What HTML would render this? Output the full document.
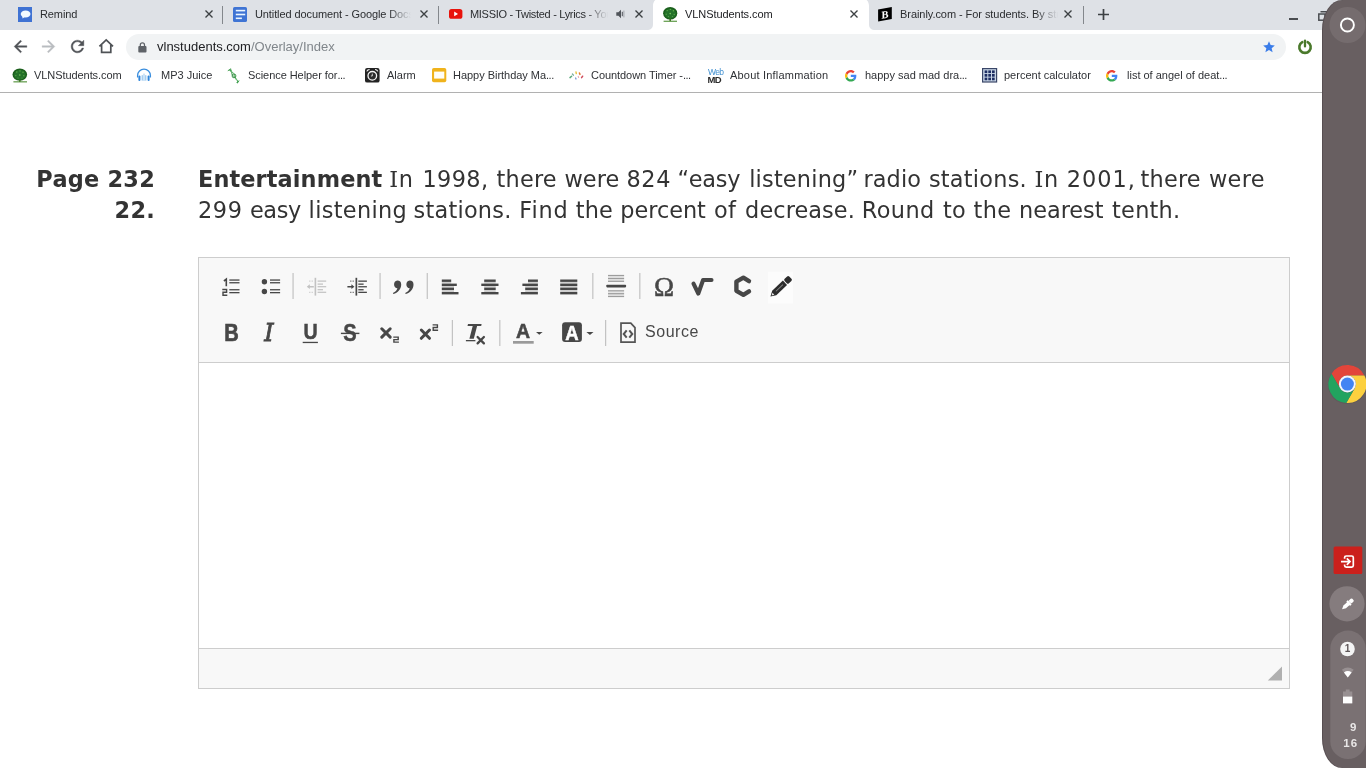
<!DOCTYPE html>
<html lang="en">
<head>
<meta charset="utf-8">
<title>VLNStudents.com</title>
<style>
html,body{margin:0;padding:0;}
body{width:1366px;height:768px;overflow:hidden;position:relative;background:#fff;font-family:"Liberation Sans",sans-serif;color:#202124;}
.abs{position:absolute;}
svg{position:absolute;overflow:visible;}
#chrome{left:0;top:0;width:1366px;height:93px;will-change:transform;}
#tabstrip{left:0;top:0;width:1366px;height:30px;background:#dee1e6;}
#toolbar{left:0;top:30px;width:1366px;height:62px;background:#fff;}
#bmline{left:0;top:92px;width:1366px;height:1px;background:#b1b1b1;}
.tabtitle{position:absolute;top:6px;height:16px;line-height:16px;font-size:11px;color:#2b2d30;white-space:nowrap;overflow:hidden;}
.fade{-webkit-mask-image:linear-gradient(90deg,#000 0,#000 calc(100% - 22px),transparent 100%);mask-image:linear-gradient(90deg,#000 0,#000 calc(100% - 22px),transparent 100%);}
.tabsep{position:absolute;top:6px;width:1px;height:18px;background:#83878c;}
#omni{left:126px;top:34px;width:1160px;height:26px;border-radius:13px;background:#f1f3f4;}
#url{left:157px;top:39px;font-size:13px;line-height:16px;white-space:nowrap;color:#202124;}
#url span{color:#80868b;}
.el{letter-spacing:-0.5px;}
.bm{position:absolute;top:67px;height:16px;line-height:16px;font-size:11px;color:#2f3135;white-space:nowrap;}
/* page */
#content{will-change:transform;font-family:"DejaVu Sans","Liberation Sans",sans-serif;color:#333;font-size:22.4px;line-height:31px;}
#pnum{left:0;top:164px;width:155px;text-align:right;font-weight:bold;letter-spacing:0.25px;}
#qtext{left:198.800px;top:164px;width:1110px;height:62px;white-space:nowrap;}
#qtext .ln{position:absolute;left:0;width:1110px;height:31px;}
#qtext .ln span{position:absolute;top:0;}
#qtext .b{font-weight:bold;}
#qtext .vI{font-family:"DejaVu Serif","Liberation Serif",serif;font-style:normal;}
#editor{left:198px;top:257px;width:1090px;height:430px;border:1px solid #cdcdcd;background:#fff;box-sizing:content-box;will-change:transform;}
#edtop{left:0;top:0;width:1090px;height:104px;background:#f8f8f8;border-bottom:1px solid #cdcdcd;}
#edbot{left:0;top:390px;width:1090px;height:39px;background:#f8f8f8;border-top:1px solid #cdcdcd;}
.sep{position:absolute;width:1px;height:26px;background:#bcbcbc;}
.gi{position:absolute;color:#474747;white-space:nowrap;}
#edicons svg.ic{filter:blur(0.35px);}
/* shelf */
#shelf{left:1322px;top:0;width:44px;height:768px;background:#685f61;border-radius:20px 0 0 20px / 30px 0 0 30px;will-change:transform;overflow:hidden;box-shadow:inset 1px 0 0 rgba(50,40,45,0.30);}
</style>
</head>
<body>
<!-- ===== browser chrome ===== -->
<div id="chrome" class="abs">
<div id="tabstrip" class="abs"></div>
<div id="toolbar" class="abs"></div>
<!-- active tab shape -->
<svg style="left:640px;top:0" width="240" height="30" viewBox="0 0 240 30">
  <path d="M6.5 30 C11 30 13 28 13 24 L13 6 C13 1 16 -2 21 -2 L221 -2 C226 -2 229 1 229 6 L229 24 C229 28 231 30 235.5 30 Z" fill="#fff"/>
</svg>
<div id="bmline" class="abs"></div>

<!-- tab 1 : Remind -->
<svg style="left:18px;top:7px" width="14" height="15" viewBox="0 0 14 15">
  <rect width="14" height="15" fill="#3f72d3"/>
  <ellipse cx="7.6" cy="7" rx="4.9" ry="3.5" fill="#f3fbff"/>
  <path d="M4.2 8.6 L4.6 11.6 L7.4 9.6 Z" fill="#f3fbff"/>
</svg>
<div class="tabtitle" style="left:40px;width:150px;letter-spacing:-0.1px;">Remind</div>
<svg class="tx" style="left:205px;top:10px" width="8" height="8" viewBox="0 0 8 8"><path d="M0.5 0.5 L7.5 7.5 M7.5 0.5 L0.5 7.5" stroke="#3c4043" stroke-width="1.35" fill="none"/></svg>
<div class="tabsep" style="left:222px;"></div>

<!-- tab 2 : Docs -->
<svg style="left:233px;top:7px" width="14" height="15" viewBox="0 0 14 15">
  <rect width="14" height="15" rx="1.6" fill="#3f74d4"/>
  <rect x="2.8" y="2.8" width="9.4" height="1.6" fill="#eaf6ff"/>
  <rect x="2.8" y="6.7" width="9.4" height="1.6" fill="#eaf6ff"/>
  <rect x="2.8" y="10.5" width="6.1" height="1.6" fill="#eaf6ff"/>
</svg>
<div class="tabtitle fade" style="left:255px;width:156px;letter-spacing:-0.1px;">Untitled document - Google Docs</div>
<svg class="tx" style="left:420px;top:10px" width="8" height="8" viewBox="0 0 8 8"><path d="M0.5 0.5 L7.5 7.5 M7.5 0.5 L0.5 7.5" stroke="#3c4043" stroke-width="1.35" fill="none"/></svg>
<div class="tabsep" style="left:438px;"></div>

<!-- tab 3 : YouTube -->
<svg style="left:448.5px;top:9.4px" width="13.4" height="9.8" viewBox="0 0 13.4 9.8">
  <rect width="13.4" height="9.8" rx="2.6" fill="#e8130c"/>
  <path d="M5.2 2.6 L9 4.9 L5.2 7.2 Z" fill="#fff"/>
</svg>
<div class="tabtitle fade" style="left:470px;width:138px;letter-spacing:-0.31px;">MISSIO - Twisted - Lyrics - YouTube</div>
<svg style="left:616px;top:9px" width="9" height="10" viewBox="0 0 9 10">
  <path d="M0.3 3.3 H2.4 L5 0.7 V9.3 L2.4 6.7 H0.3 Z" fill="#50545a"/>
  <path d="M6.3 2.8 V7.2" stroke="#50545a" stroke-width="1" fill="none"/>
  <path d="M7.9 1.6 V8.4" stroke="#9a9ea4" stroke-width="0.9" fill="none"/>
</svg>
<svg class="tx" style="left:634.7px;top:10.1px" width="8" height="8" viewBox="0 0 8 8"><path d="M0.5 0.5 L7.5 7.5 M7.5 0.5 L0.5 7.5" stroke="#3c4043" stroke-width="1.35" fill="none"/></svg>

<!-- tab 4 : VLN (active) -->
<svg style="left:662px;top:6px" width="16" height="17" viewBox="0 0 16 17">
  <ellipse cx="8.2" cy="7.3" rx="7.1" ry="6.3" fill="#1b5f1c"/>
  <ellipse cx="8.2" cy="7.6" rx="5.6" ry="4.9" fill="#24722a"/>
  <circle cx="5.2" cy="4.6" r="0.7" fill="#5fae48"/><circle cx="8.4" cy="3.4" r="0.7" fill="#5fae48"/><circle cx="11.4" cy="4.8" r="0.7" fill="#5fae48"/>
  <circle cx="4.2" cy="8.2" r="0.7" fill="#55a544"/><circle cx="8.2" cy="7.6" r="0.8" fill="#79c85c"/><circle cx="12.2" cy="8.4" r="0.7" fill="#55a544"/>
  <circle cx="6.4" cy="10.6" r="0.6" fill="#55a544"/><circle cx="10.4" cy="10.6" r="0.6" fill="#55a544"/>
  <rect x="7.4" y="12.6" width="1.6" height="2.6" fill="#3f6f22"/>
  <rect x="1.6" y="14.7" width="13.4" height="1.1" fill="#4f8f35"/>
</svg>
<div class="tabtitle" style="left:685px;width:150px;color:#202124;letter-spacing:-0.07px;">VLNStudents.com</div>
<svg class="tx" style="left:849.6px;top:10.1px" width="8" height="8" viewBox="0 0 8 8"><path d="M0.5 0.5 L7.5 7.5 M7.5 0.5 L0.5 7.5" stroke="#3c4043" stroke-width="1.35" fill="none"/></svg>

<!-- tab 5 : Brainly -->
<svg style="left:878px;top:7px" width="14" height="15" viewBox="0 0 14 15">
  <path d="M0.1 2.4 L13.8 0 L13.8 12 L0.1 14.4 Z" fill="#000"/>
  <text x="7" y="11" text-anchor="middle" font-family="Liberation Serif,serif" font-weight="bold" font-size="10.5" fill="#fff" transform="skewY(-9) translate(0,1.2)">B</text>
</svg>
<div class="tabtitle fade" style="left:900px;width:158px;letter-spacing:-0.06px;">Brainly.com - For students. By students.</div>
<svg class="tx" style="left:1064.4px;top:10.3px" width="8" height="8" viewBox="0 0 8 8"><path d="M0.5 0.5 L7.5 7.5 M7.5 0.5 L0.5 7.5" stroke="#3c4043" stroke-width="1.35" fill="none"/></svg>
<div class="tabsep" style="left:1083px;"></div>
<!-- new tab + -->
<svg style="left:1098px;top:8.6px" width="11" height="11" viewBox="0 0 11 11"><path d="M5.5 0 V11 M0 5.5 H11" stroke="#3c4043" stroke-width="1.7" fill="none"/></svg>
<!-- window controls -->
<div class="abs" style="left:1289px;top:18px;width:9px;height:2px;background:#4a4d51;"></div>
<svg style="left:1318px;top:10.5px" width="10" height="10" viewBox="0 0 10 10"><path d="M2.5 0.8 H9.2 V7" stroke="#4a4d51" stroke-width="1.5" fill="none"/><rect x="0.8" y="3" width="6.2" height="6.2" stroke="#4a4d51" stroke-width="1.5" fill="none"/></svg>

<!-- nav buttons -->
<svg style="left:10.6px;top:36.7px" width="19" height="19" viewBox="0 0 24 24"><path d="M20 11H7.83l5.59-5.59L12 4l-8 8 8 8 1.41-1.41L7.83 13H20v-2z" fill="#4f5256" stroke="#4f5256" stroke-width="0.500"/></svg>
<svg style="left:38.8px;top:36.7px" width="19" height="19" viewBox="0 0 24 24"><path d="M12 4l-1.41 1.41L16.17 11H4v2h12.17l-5.58 5.59L12 20l8-8z" fill="#b9bcc0" stroke="#b9bcc0" stroke-width="0.500"/></svg>
<svg style="left:68px;top:36.900px" width="19" height="19" viewBox="0 0 24 24"><path d="M17.65 6.35C16.2 4.9 14.21 4 12 4c-4.42 0-7.99 3.58-7.99 8s3.57 8 7.99 8c3.73 0 6.84-2.55 7.73-6h-2.08c-.82 2.33-3.04 4-5.65 4-3.31 0-6-2.69-6-6s2.690-6 6-6c1.66 0 3.14.69 4.22 1.78L13 11h7V4l-2.35 2.35z" fill="#4f5256" stroke="#4f5256" stroke-width="0.500"/></svg>
<svg style="left:98px;top:38px" width="17" height="17" viewBox="0 0 17 17"><path d="M1.4 8.4 L8.2 2 L15 8.4 M3.6 7 V14.3 H12.8 V7" stroke="#4f5256" stroke-width="1.7" fill="none" stroke-linejoin="miter"/></svg>

<!-- omnibox -->
<div id="omni" class="abs"></div>
<svg style="left:138px;top:42px" width="9" height="11" viewBox="0 0 9 11">
  <rect x="0.3" y="4.1" width="8.2" height="6.3" rx="0.9" fill="#5f6368"/>
  <path d="M2.3 4.4 V3 A2.1 2.1 0 0 1 6.5 3 V4.4" stroke="#5f6368" stroke-width="1.25" fill="none"/>
</svg>
<div id="url" class="abs">vlnstudents.com<span>/Overlay/Index</span></div>
<!-- star -->
<svg style="left:1262.3px;top:40.3px" width="14" height="14" viewBox="0 0 24 24"><path d="M12 17.27L18.18 21l-1.64-7.030L22 9.240l-7.190-.61L12 2 9.190 8.630 2 9.240l5.460 4.730L5.820 21z" fill="#3b7de9"/></svg>
<!-- power ext -->
<svg style="left:1297px;top:39px" width="16" height="16" viewBox="0 0 16 16">
  <path d="M5.3 3.2 A5.7 5.7 0 1 0 10.7 3.2" stroke="#4a792b" stroke-width="2.6" fill="none" stroke-linecap="round"/>
  <path d="M8 1.6 V7.4" stroke="#4a792b" stroke-width="2.3" fill="none" stroke-linecap="round"/>
</svg>

<!-- bookmarks -->
<svg style="left:11.5px;top:67.5px" width="16" height="15" viewBox="0 0 16 15">
  <ellipse cx="7.8" cy="6.6" rx="7.3" ry="6.1" fill="#1b5f1c"/>
  <ellipse cx="7.8" cy="6.9" rx="5.8" ry="4.8" fill="#24722a"/>
  <circle cx="4.8" cy="4" r="0.7" fill="#5fae48"/><circle cx="8" cy="2.9" r="0.7" fill="#5fae48"/><circle cx="11" cy="4.2" r="0.7" fill="#5fae48"/>
  <circle cx="3.8" cy="7.6" r="0.7" fill="#55a544"/><circle cx="7.8" cy="7" r="0.8" fill="#79c85c"/><circle cx="11.8" cy="7.8" r="0.7" fill="#55a544"/>
  <circle cx="6" cy="10" r="0.6" fill="#55a544"/><circle cx="10" cy="10" r="0.6" fill="#55a544"/>
  <rect x="7" y="12" width="1.6" height="2" fill="#3f6f22"/>
  <rect x="1.4" y="13.3" width="13.6" height="1.1" fill="#4f8f35"/>
</svg>
<div class="bm" style="left:34px;letter-spacing:-0.07px;">VLNStudents.com</div>

<svg style="left:135.5px;top:68px" width="16" height="14" viewBox="0 0 16 14">
  <path d="M1.6 9.6 V7.6 A6.4 6.4 0 0 1 14.4 7.600 V9.600" stroke="#3a8ede" stroke-width="1.3" fill="none"/>
  <rect x="2.4" y="7.6" width="2" height="5.4" rx="0.9" fill="#2f86dc"/>
  <rect x="11.6" y="7.6" width="2" height="5.4" rx="0.9" fill="#2f86dc"/>
  <rect x="5.7" y="7.2" width="1" height="5.4" fill="#7fb8ea"/>
  <rect x="7.5" y="5.6" width="1" height="7.4" fill="#9cc9f0"/>
  <rect x="9.3" y="7.2" width="1" height="5.400" fill="#7fb8ea"/>
</svg>
<div class="bm" style="left:161px;">MP3 Juice</div>

<svg style="left:226.5px;top:67.500px" width="14" height="16" viewBox="0 0 14 16">
  <path d="M0.800 2.800 L3.800 0.800 L3.600 3.400" fill="none" stroke="#3f9d4d" stroke-width="1"/>
  <path d="M2.400 2.400 C6.200 3 3.600 7 6.600 8.200 S 8 12.400 11.800 13.400" stroke="#389447" stroke-width="1" fill="none"/>
  <path d="M4 1.800 C4.200 5.400 8.400 4.600 7.800 8 S 11.400 10.400 10.600 14" stroke="#5cb86a" stroke-width="1" fill="none"/>
  <circle cx="7" cy="7.900" r="1.900" stroke="#2f8a3e" stroke-width="0.900" fill="none"/>
  <path d="M9.200 14.600 L12.800 12 L10.600 15.400 Z" fill="#3f9d4d"/>
</svg>
<div class="bm" style="left:248px;letter-spacing:-0.06px;">Science Helper for<span class="el">...</span></div>

<svg style="left:365px;top:68px" width="15" height="15" viewBox="0 0 15 15">
  <rect width="14.600" height="14.600" rx="2.200" fill="#232323"/>
  <circle cx="7.300" cy="7.800" r="4.300" stroke="#f4f4f4" stroke-width="1.300" fill="#2c2c2c"/>
  <path d="M1.800 3.400 A3 3 0 0 1 4.600 1.500" stroke="#f4f4f4" stroke-width="1.200" fill="none"/>
  <path d="M12.800 3.400 A3 3 0 0 0 10 1.500" stroke="#f4f4f4" stroke-width="1.200" fill="none"/>
  <path d="M7.300 5.600 V8 H5.900" stroke="#dcdcdc" stroke-width="0.9" fill="none"/>
</svg>
<div class="bm" style="left:387px;">Alarm</div>

<svg style="left:431.5px;top:68.300px" width="14.300" height="14.200" viewBox="0 0 14.3 14.2">
  <rect width="14.300" height="14.200" rx="1.800" fill="#f0b31c"/>
  <rect x="2.100" y="3.600" width="10.200" height="7" fill="#fffef8"/>
</svg>
<div class="bm" style="left:453px;letter-spacing:-0.03px;">Happy Birthday Ma<span class="el">...</span></div>

<svg style="left:569px;top:71px" width="16" height="9" viewBox="0 0 16 9">
  <path d="M1 6.600 L2.600 5.200" stroke="#5aa97a" stroke-width="1.500" stroke-linecap="round"/>
  <path d="M3.400 3 L4.400 4.200" stroke="#7ab0a0" stroke-width="1.300" stroke-linecap="round"/>
  <path d="M7 1 L7.300 2.600" stroke="#e8c84a" stroke-width="1.500" stroke-linecap="round"/>
  <path d="M10.400 2 L11 3.400" stroke="#e07a3a" stroke-width="1.500" stroke-linecap="round"/>
  <path d="M13.600 5.200 L12.600 6.600" stroke="#d04a5a" stroke-width="1.500" stroke-linecap="round"/>
  <path d="M6.600 7 L7 8" stroke="#7a9ad0" stroke-width="1.300" stroke-linecap="round"/>
  <path d="M9.200 5.400 L9.600 6.400" stroke="#e8a0b0" stroke-width="1.100" stroke-linecap="round"/>
</svg>
<div class="bm" style="left:591px;letter-spacing:-0.06px;">Countdown Timer -<span class="el">...</span></div>

<div class="abs" style="left:707.5px;top:67px;width:17px;height:16px;font-family:'Liberation Sans',sans-serif;font-weight:bold;letter-spacing:-0.6px;">
  <div class="abs" style="left:0.5px;top:0.5px;font-size:8.5px;line-height:8px;color:#3f8fd0;font-weight:normal;letter-spacing:-0.7px;">Web</div>
  <div class="abs" style="left:0;top:7.600px;font-size:9.500px;line-height:9px;color:#2b2b2b;">MD</div>
</div>
<div class="bm" style="left:730px;letter-spacing:0.2px;">About Inflammation</div>

<svg class="gg" style="left:844.5px;top:70px" width="11.600" height="11.600" viewBox="0 0 48 48">
  <path fill="#EA4335" d="M24 9.500c3.540 0 6.710 1.220 9.210 3.600l6.850-6.850C35.900 2.380 30.470 0 24 0 14.620 0 6.510 5.380 2.560 13.220l7.980 6.190C12.430 13.720 17.740 9.500 24 9.500z"/>
  <path fill="#4285F4" d="M46.980 24.550c0-1.570-.15-3.090-.38-4.550H24v9.020h12.940c-.58 2.960-2.260 5.480-4.780 7.180l7.730 6c4.510-4.180 7.090-10.360 7.090-17.650z"/>
  <path fill="#FBBC05" d="M10.530 28.590c-.48-1.450-.76-2.990-.76-4.590s.27-3.140.76-4.590l-7.980-6.190C.92 16.460 0 20.120 0 24c0 3.880.92 7.540 2.560 10.780l7.970-6.190z"/>
  <path fill="#34A853" d="M24 48c6.480 0 11.930-2.130 15.890-5.810l-7.730-6c-2.150 1.450-4.920 2.300-8.160 2.300-6.260 0-11.570-4.220-13.470-9.910l-7.980 6.190C6.510 42.620 14.620 48 24 48z"/>
</svg>
<div class="bm" style="left:865px;">happy sad mad dra<span class="el">...</span></div>

<svg style="left:981.7px;top:68.200px" width="15.200" height="14.600" viewBox="0 0 15.2 14.6">
  <rect x="0.600" y="0.600" width="14" height="13.400" fill="#c9d6e6" stroke="#3a4668" stroke-width="1.200"/>
  <g fill="#1d2d62">
    <rect x="2.600" y="2.400" width="2.700" height="2.700"/><rect x="6.300" y="2.400" width="2.700" height="2.700"/><rect x="10" y="2.400" width="2.700" height="2.700"/>
    <rect x="2.600" y="6" width="2.700" height="2.700"/><rect x="6.300" y="6" width="2.700" height="2.700"/><rect x="10" y="6" width="2.700" height="2.700"/>
    <rect x="2.600" y="9.600" width="2.700" height="2.700"/><rect x="6.300" y="9.600" width="2.700" height="2.700"/><rect x="10" y="9.600" width="2.700" height="2.700"/>
  </g>
</svg>
<div class="bm" style="left:1004px;">percent calculator</div>

<svg class="gg" style="left:1106.400px;top:70px" width="11.600" height="11.600" viewBox="0 0 48 48">
  <path fill="#EA4335" d="M24 9.500c3.540 0 6.710 1.220 9.210 3.600l6.850-6.850C35.900 2.380 30.470 0 24 0 14.620 0 6.510 5.380 2.560 13.220l7.980 6.190C12.430 13.720 17.740 9.500 24 9.500z"/>
  <path fill="#4285F4" d="M46.980 24.550c0-1.570-.15-3.090-.38-4.550H24v9.020h12.940c-.58 2.960-2.260 5.480-4.780 7.180l7.730 6c4.510-4.180 7.090-10.360 7.090-17.650z"/>
  <path fill="#FBBC05" d="M10.530 28.590c-.48-1.450-.76-2.990-.76-4.590s.27-3.140.76-4.590l-7.980-6.190C.92 16.460 0 20.120 0 24c0 3.880.92 7.540 2.560 10.780l7.970-6.190z"/>
  <path fill="#34A853" d="M24 48c6.480 0 11.930-2.130 15.890-5.810l-7.730-6c-2.150 1.450-4.920 2.300-8.160 2.300-6.260 0-11.570-4.220-13.470-9.910l-7.980 6.190C6.510 42.620 14.620 48 24 48z"/>
</svg>
<div class="bm" style="left:1127px;">list of angel of deat<span class="el">...</span></div>
</div>

<!-- ===== page content ===== -->
<div id="content">
  <div id="pnum" class="abs">Page 232<br>22.</div>
  <div id="qtext" class="abs">
<div class="ln" style="top:0px"><span class="b" style="left:-0.8px;letter-spacing:0.12px">Entertainment</span> <span style="left:190.4px;letter-spacing:0.6px"><i class="vI">I</i>n</span> <span style="left:223.7px;letter-spacing:0.38px">1998,</span> <span style="left:297.8px;letter-spacing:0.18px">there</span> <span style="left:365.7px;letter-spacing:0.07px">were</span> <span style="left:427.6px;letter-spacing:0.65px">824</span> <span style="left:478.7px;letter-spacing:-0.27px">“easy</span> <span style="left:550.4px;letter-spacing:0.20px">listening”</span> <span style="left:664.6px;letter-spacing:0.12px">radio</span> <span style="left:730.1px;letter-spacing:0.25px">stations.</span> <span style="left:835.8px;letter-spacing:0.6px"><i class="vI">I</i>n</span> <span style="left:867.9px;letter-spacing:1.05px">2001,</span> <span style="left:941.8px;letter-spacing:0.18px">there</span> <span style="left:1010.2px;letter-spacing:0.30px">were</span></div>
<div class="ln" style="top:31px"><span style="left:-0.8px;letter-spacing:0.60px">299</span> <span style="left:51.2px;letter-spacing:-0.40px">easy</span> <span style="left:109.8px;letter-spacing:0.34px">listening</span> <span style="left:214.7px;letter-spacing:0.25px">stations.</span> <span style="left:320.5px;letter-spacing:0.87px">Find</span> <span style="left:377.0px;letter-spacing:0.15px">the</span> <span style="left:421.5px;letter-spacing:-0.03px">percent</span> <span style="left:515.3px;letter-spacing:0.30px">of</span> <span style="left:546.3px;letter-spacing:0.08px">decrease.</span> <span style="left:663.0px;letter-spacing:0.40px">Round</span> <span style="left:744.1px;letter-spacing:0.30px">to</span> <span style="left:774.8px;letter-spacing:0.30px">the</span> <span style="left:820.3px;letter-spacing:-0.03px">nearest</span> <span style="left:913.3px;letter-spacing:0.24px">tenth.</span></div>
</div>
</div>

<div id="editor" class="abs">
  <div id="edtop" class="abs"></div>
  <div id="edbot" class="abs"></div>
</div>
<!-- editor toolbar icons (page coordinates) -->
<div id="edicons" class="abs" style="left:0;top:0;width:1366px;height:768px;will-change:transform;">
<svg class="ic" style="left:0;top:0" width="1366" height="768" viewBox="0 0 1366 768">
 <g fill="#474747" stroke="none">
  <!-- numbered list -->
  <path d="M223.900 281 L226.300 279.200 V286.200" fill="none" stroke="#474747" stroke-width="1.600"/>
  <path d="M222.300 289.500 H226.600 V292.300 H223 V295.200 H227.300" fill="none" stroke="#474747" stroke-width="1.400"/>
  <rect x="229.300" y="279.400" width="10.200" height="1.300"/><rect x="229.300" y="282.100" width="10.200" height="1.300"/>
  <rect x="229.300" y="289.100" width="10.200" height="1.300"/><rect x="229.300" y="292" width="10.200" height="1.300"/>
  <!-- bulleted list -->
  <circle cx="264.400" cy="281.800" r="2.700"/><circle cx="264.400" cy="291.500" r="2.700"/>
  <rect x="270" y="279.400" width="10.100" height="1.300"/><rect x="270" y="282.100" width="10.100" height="1.300"/>
  <rect x="270" y="289.100" width="10.100" height="1.300"/><rect x="270" y="292" width="10.100" height="1.300"/>
  <!-- outdent (disabled) -->
  <g opacity="0.3">
   <rect x="314.600" y="277.800" width="1.600" height="17.800"/>
   <rect x="317.600" y="280.500" width="8.600" height="1.200"/><rect x="317.600" y="283.500" width="5.400" height="1.200"/><rect x="317.600" y="286.100" width="8.600" height="1.200"/><rect x="317.600" y="289.100" width="5.400" height="1.200"/><rect x="317.600" y="291.700" width="8.600" height="1.200"/>
   <path d="M306.800 286.700 L309.800 284.300 V285.900 H313.800 V287.500 H309.800 V289.100 Z"/>
   <rect x="309.200" y="280.600" width="1.200" height="1"/><rect x="311.600" y="280.600" width="1.200" height="1"/>
   <rect x="309.200" y="291.800" width="1.200" height="1"/><rect x="311.600" y="291.800" width="1.200" height="1"/>
  </g>
  <!-- indent -->
  <rect x="355.500" y="277.800" width="1.700" height="17.800"/>
  <rect x="358.300" y="280.500" width="8.600" height="1.300"/><rect x="358.300" y="283.500" width="5.300" height="1.300"/><rect x="358.300" y="286.100" width="8.600" height="1.300"/><rect x="358.300" y="289.100" width="5.300" height="1.300"/><rect x="358.300" y="291.700" width="8.600" height="1.300"/>
  <path d="M354.400 286.700 L351.400 284.300 V285.900 H347.400 V287.500 H351.400 V289.100 Z"/>
  <rect x="350.200" y="280.600" width="1.200" height="1"/><rect x="352.600" y="280.600" width="1.200" height="1"/>
  <rect x="350.200" y="291.800" width="1.200" height="1"/><rect x="352.600" y="291.800" width="1.200" height="1"/>
  <!-- blockquote -->
  <path d="M397.300 280.500 a3.900 3.900 0 0 1 3.900 3.900 c0 4.600 -3.400 8.200 -7.800 9.600 l-0.500 -0.900 c2.600 -1.300 4.100 -3.100 4.500 -4.900 a3.900 3.900 0 0 1 -0.100 -7.700 z"/>
  <path d="M409.600 280.500 a3.900 3.900 0 0 1 3.900 3.900 c0 4.600 -3.400 8.200 -7.800 9.600 l-0.500 -0.900 c2.600 -1.300 4.100 -3.100 4.500 -4.900 a3.900 3.900 0 0 1 -0.100 -7.700 z"/>
  <g fill="#cfcfcf"><rect x="441.8" y="281.9" width="9.4" height="1.7"/><rect x="441.8" y="286.0" width="12.2" height="1.6"/><rect x="441.8" y="290.0" width="12.2" height="2.0"/><rect x="484.2" y="281.9" width="11.5" height="1.7"/><rect x="484.2" y="286.0" width="11.5" height="1.6"/><rect x="484.2" y="290.0" width="11.5" height="2.0"/><rect x="528.0" y="281.9" width="9.9" height="1.7"/><rect x="525.2" y="286.0" width="12.7" height="1.6"/><rect x="525.2" y="290.0" width="12.7" height="2.0"/><rect x="560.2" y="281.9" width="17.1" height="1.7"/><rect x="560.2" y="286.0" width="17.1" height="1.6"/><rect x="560.2" y="290.0" width="17.1" height="2.0"/></g>
  <g fill="#e6e6e6"><rect x="608" y="275.500" width="16.100" height="6"/><rect x="608" y="290.800" width="16.100" height="5.900"/></g>
  <!-- align left -->
  <rect x="441.800" y="279.500" width="9.400" height="2.400"/><rect x="441.800" y="283.600" width="15" height="2.400"/><rect x="441.800" y="287.600" width="12.200" height="2.400"/><rect x="441.800" y="292" width="16.700" height="2.400"/>
  <!-- center -->
  <rect x="484.200" y="279.500" width="11.500" height="2.400"/><rect x="481.300" y="283.600" width="17.200" height="2.400"/><rect x="484.200" y="287.600" width="11.500" height="2.400"/><rect x="481.300" y="292" width="17.200" height="2.400"/>
  <!-- right -->
  <rect x="528" y="279.500" width="9.900" height="2.400"/><rect x="522.400" y="283.600" width="15.500" height="2.400"/><rect x="525.200" y="287.600" width="12.700" height="2.400"/><rect x="520.900" y="292" width="17" height="2.400"/>
  <!-- justify -->
  <rect x="560.200" y="279.500" width="17.100" height="2.400"/><rect x="560.200" y="283.600" width="17.100" height="2.400"/><rect x="560.200" y="287.600" width="17.100" height="2.400"/><rect x="560.200" y="292" width="17.100" height="2.400"/>
  <!-- horizontal rule -->
  <g fill="#9d9d9d"><rect x="608" y="274.900" width="16.100" height="1.200"/><rect x="608" y="277.900" width="16.100" height="1.200"/><rect x="608" y="280.700" width="16.100" height="1.200"/>
  <rect x="608" y="290.200" width="16.100" height="1.200"/><rect x="608" y="293.100" width="16.100" height="1.200"/><rect x="608" y="295.900" width="16.100" height="1.200"/></g>
  <rect x="606.300" y="284.800" width="19.800" height="2.600" rx="0.800"/>
  <!-- sqrt -->
  <path d="M693.500 283.700 L698.300 293.500 L703.100 280 H711.500" fill="none" stroke="#474747" stroke-width="4.100" stroke-linecap="round" stroke-linejoin="round"/>
  <!-- chem C -->
  <path d="M749 281.100 L743.400 277.700 L736.400 281.700 V290.800 L743.400 294.800 L749 291.300" fill="none" stroke="#474747" stroke-width="4.400" stroke-linecap="round" stroke-linejoin="round"/>
 </g>
 <!-- pencil -->
 <rect x="768" y="271.800" width="25" height="31.800" fill="#fcfcfc"/>
 <g transform="translate(781.500 286.100) rotate(-43.500)" fill="#2c2c2c">
   <path d="M-15.200 0 L-10 -3 H4.800 V3 H-10 Z"/>
   <rect x="5.800" y="-3.100" width="6.400" height="6.200" rx="1.500"/>
   <path d="M-13.600 0 L-11.200 -1.400 V1.400 Z" fill="#e8e8e8"/>
   <rect x="-7.600" y="-0.500" width="9.600" height="0.900" fill="#8a8a8a"/>
 </g>
 <!-- row 2 -->
 <g fill="#474747">
  <!-- underline bar -->
  <rect x="302.700" y="341.800" width="15.200" height="1.300"/>
  <!-- strike bar -->
  <rect x="340.900" y="332.700" width="18.500" height="1.400"/>
  <!-- subscript x -->
  <path d="M381.800 328.800 L390.200 337.100 M390.200 328.800 L381.800 337.100" fill="none" stroke="#474747" stroke-width="3" stroke-linecap="round"/>
  <path d="M393.300 337.100 H398.200 V339.600 H393.900 V342.100 H398.900" fill="none" stroke="#474747" stroke-width="1.400"/>
  <!-- superscript x -->
  <path d="M421.300 330 L429.500 338.300 M429.500 330 L421.300 338.300" fill="none" stroke="#474747" stroke-width="3" stroke-linecap="round"/>
  <path d="M432.600 324.900 H437.400 V327.500 H433.200 V330.200 H438.100" fill="none" stroke="#474747" stroke-width="1.400"/>
  <!-- remove format -->
  <path d="M468 324 H481.600 L481.200 326.100 H477.100 L473.800 338.700 H469.400 L472.700 326.100 H467.500 Z"/>
  <rect x="465.900" y="340" width="9.500" height="1.300"/>
  <path d="M477.600 337 L483.900 343.400 M483.900 337 L477.600 343.400" fill="none" stroke="#474747" stroke-width="2.300" stroke-linecap="round"/>
  <!-- text color bar + arrow -->
  <rect x="513" y="341" width="20.700" height="2.700" fill="#9a9a9a"/>
  <path d="M536 332 H542.600 L539.300 334.800 Z"/>
  <!-- bg color -->
  <rect x="562.100" y="322.200" width="19.800" height="19.900" rx="3"/>
  <path d="M586.400 332 H593.500 L589.950 334.900 Z"/>
  <!-- source doc -->
  <path d="M621 323.100 H630.800 L635 327.600 V342.100 H621 Z" fill="none" stroke="#555" stroke-width="1.700" stroke-linejoin="miter"/>
  <path d="M626.700 330.300 L623.700 334 L626.700 337.700 M629.300 330.300 L632.300 334 L629.300 337.700" fill="none" stroke="#555" stroke-width="2"/>
 </g>
 <!-- separators -->
 <g fill="#bdbdbd">
  <rect x="292.500" y="273" width="1.100" height="26"/><rect x="379.500" y="273" width="1.100" height="26"/><rect x="426.700" y="273" width="1.100" height="26"/>
  <rect x="592.300" y="273" width="1.100" height="26"/><rect x="639.300" y="273" width="1.100" height="26"/>
  <rect x="451.800" y="320" width="1.100" height="26"/><rect x="499.300" y="320" width="1.100" height="26"/><rect x="605.100" y="320" width="1.100" height="26"/>
 </g>
 <!-- resize grip -->
 <path d="M1282 666.500 V680.600 H1267.800 Z" fill="#b0b0b0"/>
</svg>
<!-- text glyph icons -->
<div class="gi" style="left:652px;top:270.600px;width:24px;font-family:'Liberation Serif',serif;font-weight:normal;font-size:27px;line-height:32px;text-align:center;-webkit-text-stroke:0.550px #474747;">Ω</div>
<div class="gi" style="left:221px;top:317px;width:21px;font-family:'Liberation Sans',sans-serif;font-weight:bold;font-size:24.500px;line-height:32px;text-align:center;transform:scaleX(0.820);-webkit-text-stroke:0.700px #474747;">B</div>
<div class="gi" style="left:258px;top:317.100px;width:22px;font-family:'DejaVu Serif',serif;font-weight:normal;font-style:italic;font-size:23.800px;line-height:32px;text-align:center;-webkit-text-stroke:0.800px #474747;">I</div>
<div class="gi" style="left:299px;top:316.000px;width:23px;font-family:'Liberation Sans',sans-serif;font-weight:bold;font-size:21.800px;line-height:32px;text-align:center;transform:scaleX(0.900);-webkit-text-stroke:0.500px #474747;">U</div>
<div class="gi" style="left:339px;top:317px;width:22px;font-family:'Liberation Sans',sans-serif;font-weight:bold;font-size:24.500px;line-height:32px;text-align:center;transform:scaleX(0.820);-webkit-text-stroke:0.500px #474747;">S</div>
<div class="gi" style="left:512px;top:316px;width:22px;font-family:'Liberation Sans',sans-serif;font-weight:bold;font-size:19.500px;line-height:30px;text-align:center;-webkit-text-stroke:0.500px #474747;">A</div>
<div class="gi" style="left:561px;top:317.500px;width:22px;font-family:'Liberation Sans',sans-serif;font-weight:bold;font-size:19.500px;line-height:30px;text-align:center;color:#fff;-webkit-text-stroke:0.500px #fff;transform:scaleX(0.950);">A</div>
<div class="gi" style="left:645px;top:322px;font-family:'Liberation Sans',sans-serif;font-size:16px;line-height:19px;color:#484848;letter-spacing:0.550px;">Source</div>
</div>

<!-- ===== ChromeOS shelf ===== -->
<div id="shelf" class="abs">
 <svg style="left:0;top:0" width="44" height="768" viewBox="1322 0 44 768">
  <!-- launcher -->
  <circle cx="1347.500" cy="25" r="18" fill="#756c6e"/>
  <circle cx="1347.400" cy="25" r="6.500" fill="none" stroke="#fff" stroke-width="1.900"/>
  <!-- chrome -->
  <g transform="translate(1347.400 384.100)">
   <circle r="19.400" fill="#5a5254" opacity="0.500" cy="0.600"/>
   <path d="M0 -8.500 L17 -8.500 A19 19 0 0 0 -15.860 -10.470 L-7.360 4.250 A8.500 8.500 0 0 1 0 -8.500 Z" fill="#e2453a"/>
   <path d="M7.360 4.250 L-1.140 18.970 A19 19 0 0 0 17 -8.500 L0 -8.500 A8.500 8.500 0 0 1 7.360 4.250 Z" fill="#fcd03f"/>
   <path d="M-7.360 4.250 L-15.860 -10.470 A19 19 0 0 0 -1.140 18.970 L7.360 4.250 A8.500 8.500 0 0 1 -7.360 4.250 Z" fill="#22a35f"/>
   <circle r="8.500" fill="#f4f6fb"/>
   <circle r="6.500" fill="#4284f3"/>
  </g>
  <!-- red app -->
  <rect x="1333.600" y="546.400" width="28.700" height="27.600" rx="1.500" fill="#cb201c"/>
  <path d="M1344.600 558.800 V557.600 A1.600 1.600 0 0 1 1346.200 556 H1351.700 A1.600 1.600 0 0 1 1353.300 557.600 V565.600 A1.600 1.600 0 0 1 1351.700 567.200 H1346.200 A1.600 1.600 0 0 1 1344.600 565.600 V564.400" fill="none" stroke="#fff" stroke-width="1.700"/>
  <path d="M1341 561.600 H1349.600 M1346.800 558.400 L1350 561.600 L1346.800 564.800" fill="none" stroke="#fff" stroke-width="1.700"/>
  <!-- stylus -->
  <circle cx="1347" cy="603.800" r="17.600" fill="#857c7e"/>
  <g transform="translate(1347.400 604.400) rotate(-42)" fill="#fff">
   <path d="M-7.200 0 L-3.600 -1.900 H1.600 V1.900 H-3.600 Z"/>
   <rect x="1" y="-2.900" width="2.200" height="5.800" rx="0.600"/>
   <rect x="3.200" y="-2" width="4.200" height="4" rx="1.200"/>
  </g>
  <!-- status pill -->
  <rect x="1330.300" y="630.600" width="35.400" height="128.400" rx="17.600" fill="#7a7173"/>
  <circle cx="1347.500" cy="649" r="7.300" fill="#f4f4f4"/>
  <!-- wifi -->
  <path d="M1347.800 677.600 L1341.900 669.800 A9.800 9.800 0 0 1 1353.700 669.800 Z" fill="#989092"/>
  <path d="M1347.800 677.600 L1343.900 672.400 A6.500 6.500 0 0 1 1351.700 672.400 Z" fill="#fff"/>
  <!-- battery -->
  <path d="M1345.800 689.600 H1349.600 V691.400 H1352.300 V697 H1343 V691.400 H1345.800 Z" fill="#989092"/>
  <rect x="1343" y="696.600" width="9.300" height="6.800" fill="#fff"/>
 </svg>
 <div class="abs" style="left:20.500px;top:642px;width:10px;height:14px;line-height:14px;font-size:10px;font-weight:bold;color:#5f5759;text-align:center;">1</div>
 <div class="abs" style="left:10px;top:720px;width:24.600px;height:14px;line-height:14px;font-size:11.500px;font-weight:bold;color:#e9e7e7;text-align:right;letter-spacing:0.300px;">9</div>
 <div class="abs" style="left:10px;top:735.500px;width:26.400px;height:14px;line-height:14px;font-size:11.500px;font-weight:bold;color:#e9e7e7;text-align:right;letter-spacing:1.200px;">16</div>
</div>
</body>
</html>
